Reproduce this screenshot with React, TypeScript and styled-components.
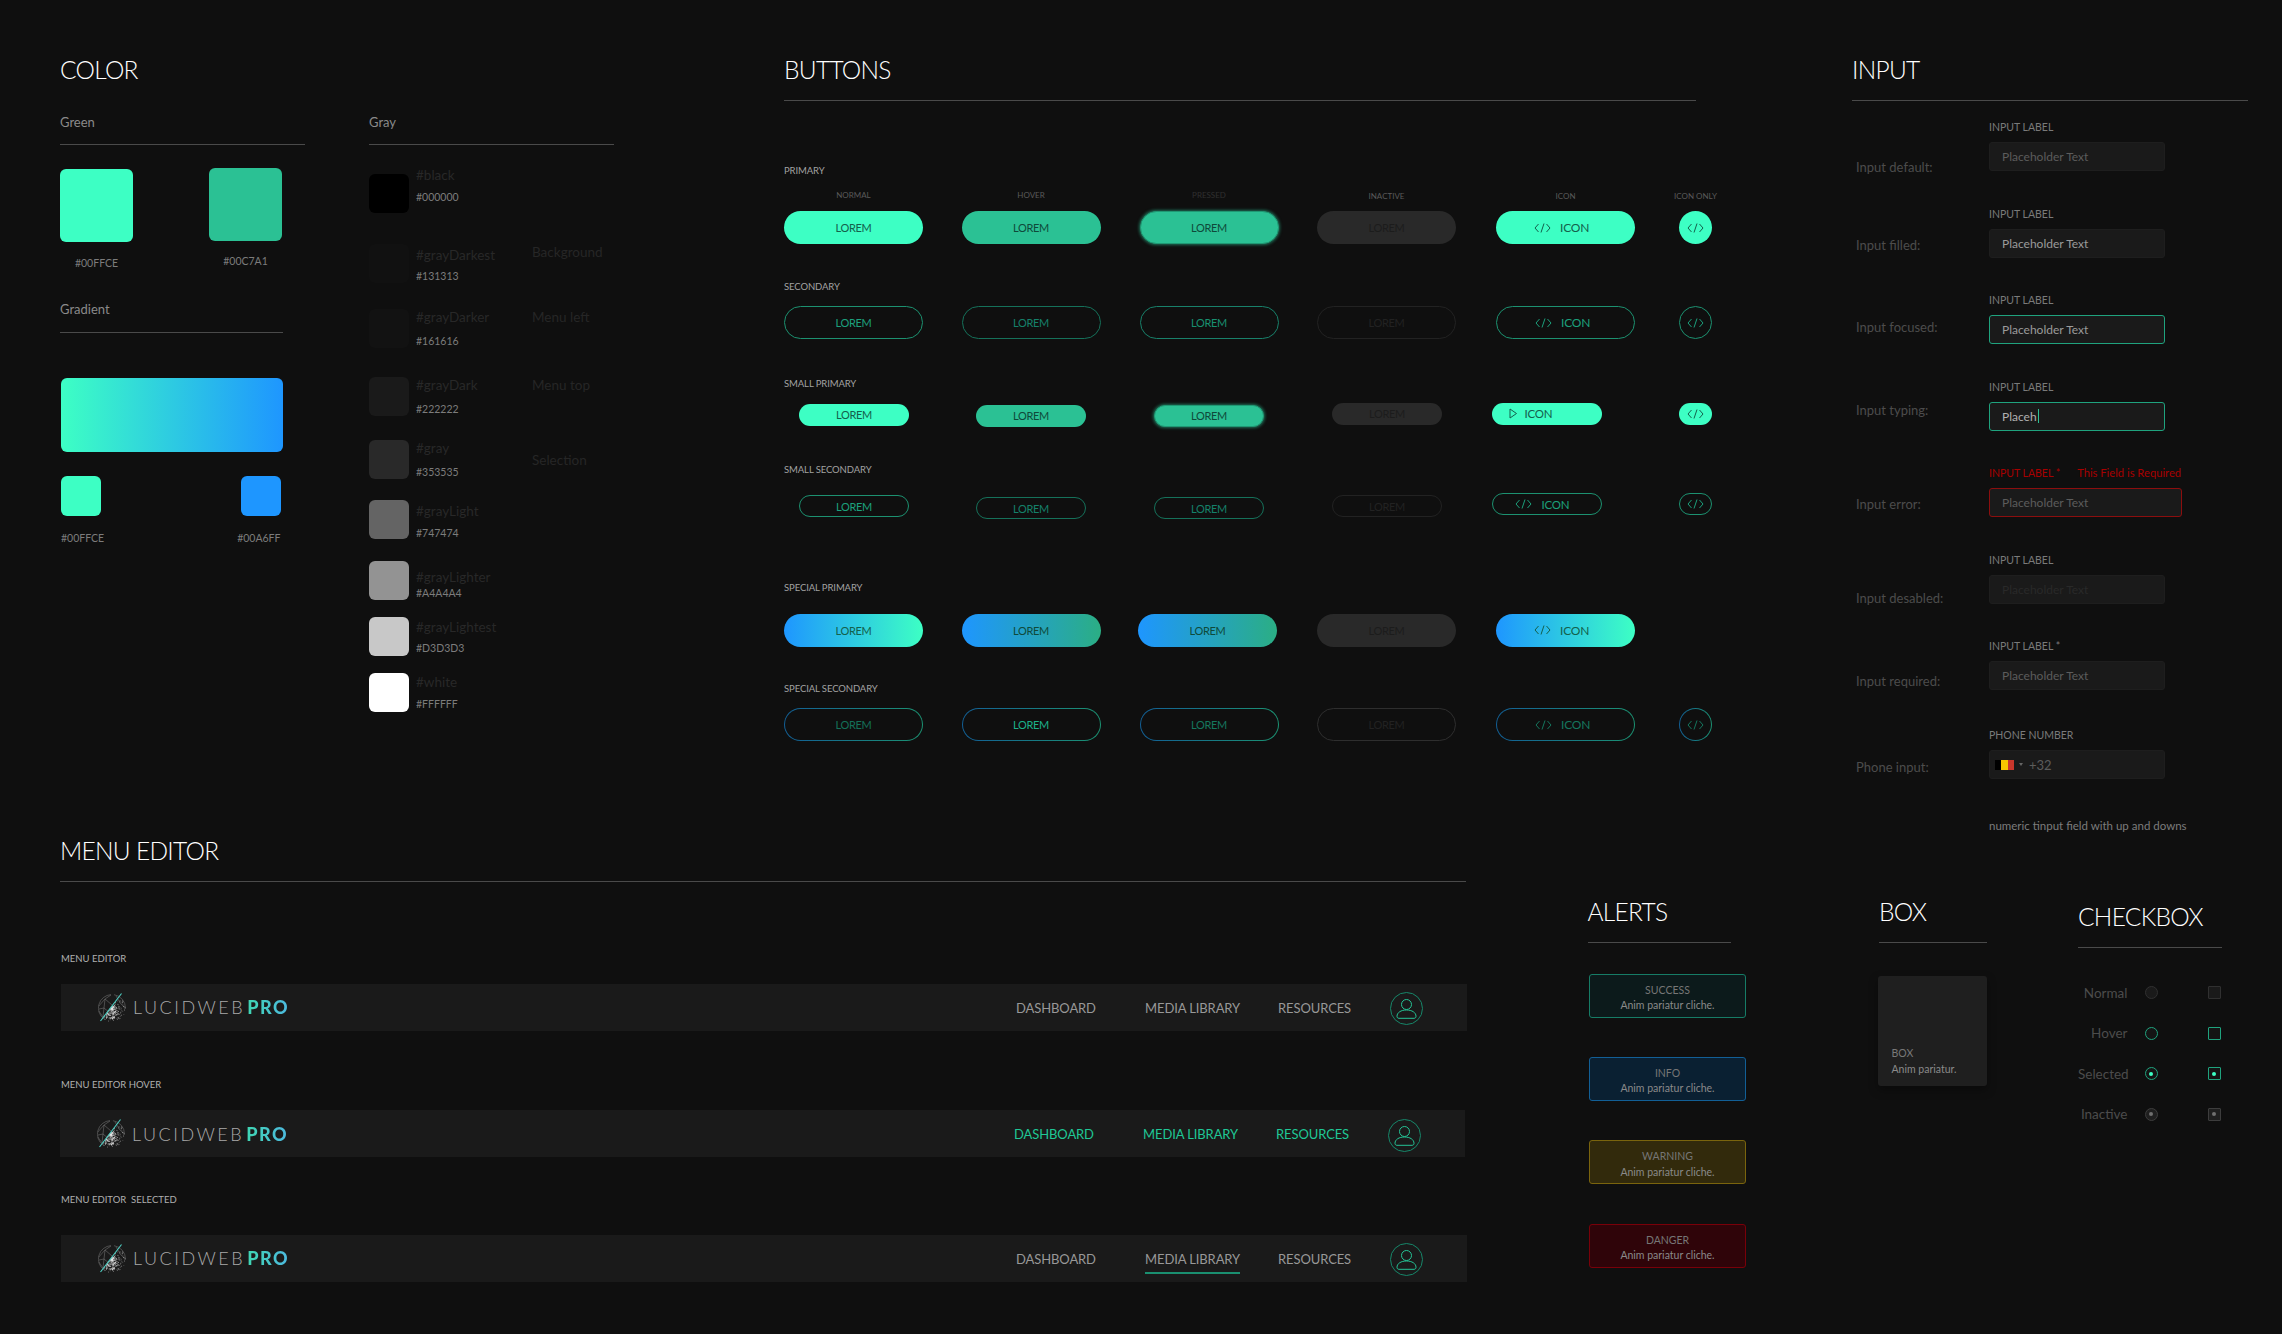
import React from 'react';
import styled, { createGlobalStyle, css } from 'styled-components';

const GlobalStyle = createGlobalStyle`
    html, body {
        margin: 0;
        padding: 0;
        background: #0f0f0f;
    }
    * {
        box-sizing: border-box;
    }
`;

const FONT = `Lato, 'Open Sans', 'Liberation Sans', sans-serif`;

const Page = styled.div`
    width: 2282px;
    height: 1334px;
    overflow: hidden;
    background: #0f0f0f;
    font-family: ${FONT};
    display: flex;
    flex-direction: column;
`;

const TopRow = styled.div`
    height: 836px;
    padding: 55px 0 0 60px;
    display: grid;
    grid-template-columns: 309px 415px 1068px 395px;
    align-items: start;
`;

const BottomRow = styled.div`
    padding-left: 60px;
    display: grid;
    grid-template-columns: 1527.5px 291.5px 199px 160px;
    align-items: start;
`;

const Column = styled.section<{ $top?: number; $left?: number }>`
    display: flex;
    flex-direction: column;
    align-items: flex-start;
    margin-top: ${(p) => p.$top ?? 0}px;
    margin-left: ${(p) => p.$left ?? 0}px;
`;

const Title = styled.h2`
    margin: 0;
    height: 30px;
    font-size: 24.5px;
    line-height: 30px;
    font-weight: 300;
    letter-spacing: -0.7px;
    color: #ffffff;
    white-space: nowrap;
`;

const Rule = styled.div<{ $w: number; $top?: number }>`
    width: ${(p) => p.$w}px;
    height: 1px;
    margin-top: ${(p) => p.$top ?? 15}px;
    background: #4a4a4a;
`;

/* color */
const SubLabel = styled.div<{ $top: number }>`
    margin-top: ${(p) => p.$top}px;
    height: 16px;
    font-size: 13px;
    line-height: 16px;
    color: #8a8a8a;
`;

const SwatchRow = styled.div<{ $w: number; $top: number; $left?: number }>`
    width: ${(p) => p.$w}px;
    margin-top: ${(p) => p.$top}px;
    margin-left: ${(p) => p.$left ?? 0}px;
    display: flex;
    justify-content: space-between;
    align-items: flex-start;
`;

const SwatchItem = styled.div<{ $top?: number; $align?: string }>`
    display: flex;
    flex-direction: column;
    align-items: ${(p) => p.$align ?? 'center'};
    margin-top: ${(p) => p.$top ?? 0}px;
`;

const Swatch = styled.div<{ $size: number; $color: string }>`
    width: ${(p) => p.$size}px;
    height: ${(p) => p.$size}px;
    border-radius: 6px;
    background: ${(p) => p.$color};
`;

const Caption = styled.div<{ $top: number }>`
    margin-top: ${(p) => p.$top}px;
    height: 14px;
    font-size: 10.5px;
    line-height: 14px;
    color: #7c7c7c;
    white-space: nowrap;
`;

const GradientBar = styled.div`
    width: 221.5px;
    height: 73.5px;
    margin: 45px 0 0 1px;
    border-radius: 6px;
    background: linear-gradient(90deg, #3dffc4 0%, #1e96ff 100%);
`;

const GrayRow = styled.div<{ $top: number }>`
    margin-top: ${(p) => p.$top}px;
    width: 320px;
    height: 39px;
    display: grid;
    grid-template-columns: 47px 116px auto;
    align-items: start;
`;

const GraySwatch = styled.div<{ $color: string }>`
    width: 40px;
    height: 39px;
    border-radius: 6px;
    background: ${(p) => p.$color};
`;

const GrayText = styled.div`
    display: flex;
    flex-direction: column;
`;

const GrayName = styled.div<{ $top: number }>`
    margin-top: ${(p) => p.$top}px;
    height: 16px;
    font-size: 13.5px;
    line-height: 16px;
    color: #282828;
    white-space: nowrap;
`;

const GrayHex = styled.div<{ $top: number }>`
    margin-top: ${(p) => p.$top}px;
    height: 14px;
    font-size: 10.5px;
    line-height: 14px;
    color: #7c7c7c;
`;

const GrayNote = styled.div<{ $top: number }>`
    margin-top: ${(p) => p.$top}px;
    height: 16px;
    font-size: 13.5px;
    line-height: 16px;
    color: #262626;
    white-space: nowrap;
`;

/* buttons */
const GroupLabel = styled.div<{ $top: number; $left?: number }>`
    margin-top: ${(p) => p.$top}px;
    margin-left: ${(p) => p.$left ?? 0}px;
    height: 14px;
    font-size: 9.5px;
    line-height: 14px;
    letter-spacing: -0.1px;
    color: #a2a2a2;
    white-space: nowrap;
`;

const ButtonGrid = styled.div<{ $top: number }>`
    margin-top: ${(p) => p.$top}px;
    display: grid;
    grid-template-columns: 177.5px 178px 177.5px 179px 183px 33px;
    align-items: start;
`;

const HeadCell = styled.div<{ $color: string; $w?: number; $dy?: number; $left?: number }>`
    width: ${(p) => p.$w ?? 139}px;
    margin-left: ${(p) => p.$left ?? 0}px;
    margin-top: ${(p) => p.$dy ?? 0}px;
    text-align: center;
    height: 14px;
    font-size: 8px;
    line-height: 14px;
    color: ${(p) => p.$color};
    white-space: nowrap;
`;

type Kind =
    | 'primary'
    | 'hover'
    | 'pressed'
    | 'off'
    | 'line'
    | 'lineHover'
    | 'linePressed'
    | 'lineOff'
    | 'special'
    | 'specialHover'
    | 'ring'
    | 'ringDim'
    | 'ringBright'
    | 'ringOff';

const ink = '#14604c';

const ring = (from: string, to: string) => css`
    border: 1px solid transparent;
    background:
        linear-gradient(#0f0f0f, #0f0f0f) padding-box,
        linear-gradient(90deg, ${from}, ${to}) border-box;
`;

const kinds: Record<Kind, ReturnType<typeof css>> = {
    primary: css`
        background: #3dffc4;
        color: ${ink};
    `,
    hover: css`
        background: #2bc194;
        color: #0f4a3a;
    `,
    pressed: css`
        background: #2bc194;
        color: #0f4a3a;
        box-shadow: 0 0 3px 1px #2bc19488;
        border: 1px solid #1f9873;
    `,
    off: css`
        background: #292929;
        color: #1c1c1c;
    `,
    line: css`
        background: transparent;
        border: 1px solid #1c9170;
        color: #1ca07c;
    `,
    lineHover: css`
        background: transparent;
        border: 1px solid #15715a;
        color: #15806a;
    `,
    linePressed: css`
        background: transparent;
        border: 1px solid #18806a;
        color: #189070;
    `,
    lineOff: css`
        background: transparent;
        border: 1px solid #222222;
        color: #222222;
    `,
    special: css`
        background: linear-gradient(90deg, #1e96ff 0%, #3dffc4 100%);
        color: ${ink};
    `,
    specialHover: css`
        background: linear-gradient(90deg, #1e96ff 0%, #2bae84 100%);
        color: #0f4a3a;
    `,
    ring: css`
        ${ring('#125f96', '#1b9272')};
        color: #15765e;
    `,
    ringDim: css`
        ${ring('#125f96', '#1b9272')};
        color: #147058;
    `,
    ringBright: css`
        ${ring('#125f96', '#1b9272')};
        color: #1cb08a;
    `,
    ringOff: css`
        background: transparent;
        border: 1px solid #2e2e2e;
        color: #222222;
    `,
};

const Btn = styled.button<{
    $kind: Kind;
    $small?: boolean;
    $round?: boolean;
    $dx?: number;
    $dy?: number;
    $iconFirst?: number;
}>`
    appearance: none;
    border: none;
    padding: 0;
    margin: ${(p) => p.$dy ?? 0}px 0 0 ${(p) => p.$dx ?? 0}px;
    width: ${(p) => (p.$round ? 33 : p.$small ? 110 : 139)}px;
    height: ${(p) => (p.$small ? 22 : 33)}px;
    border-radius: ${(p) => (p.$small ? 11 : 16.5)}px;
    font-family: ${FONT};
    font-size: 11px;
    letter-spacing: -0.3px;
    display: flex;
    align-items: center;
    justify-content: ${(p) => (p.$iconFirst !== undefined ? 'flex-start' : 'center')};
    padding-left: ${(p) => p.$iconFirst ?? 0}px;
    white-space: nowrap;
    ${(p) => kinds[p.$kind]};
`;

const IconText = styled.span<{ $gap: number; $big?: boolean }>`
    margin-left: ${(p) => p.$gap}px;
    font-size: ${(p) => (p.$big ? 12 : 11.5)}px;
    letter-spacing: -0.2px;
`;

const CodeIcon = () => (
    <svg width="17" height="10" viewBox="0 0 17 10" fill="none" stroke="currentColor" strokeWidth="1">
        <path d="M4.5 1 1 5l3.5 4" />
        <path d="M12.5 1 16 5l-3.5 4" />
        <path d="M10 .5 7 9.5" />
    </svg>
);

const PlayIcon = () => (
    <svg width="9" height="11" viewBox="0 0 9 11" fill="none" stroke="currentColor" strokeWidth="1">
        <path d="M1 1v9l6.5-4.5z" />
    </svg>
);

/* input */
const InputRows = styled.div`
    display: flex;
    flex-direction: column;
`;

const InputRow = styled.div<{ $top: number }>`
    margin-top: ${(p) => p.$top}px;
    display: grid;
    grid-template-columns: 137px auto;
    grid-template-rows: 51px;
    align-items: start;
`;

const RowLabel = styled.div<{ $top: number }>`
    margin: ${(p) => p.$top}px 0 0 4px;
    height: 16px;
    font-size: 13px;
    line-height: 16px;
    color: #4c4c4c;
    white-space: nowrap;
`;

const FieldHead = styled.div`
    height: 14px;
    display: flex;
    gap: 17px;
    align-items: center;
    white-space: nowrap;
`;

const FieldLabel = styled.span<{ $error?: boolean }>`
    font-size: 10.5px;
    color: ${(p) => (p.$error ? '#a80000' : '#7a7a7a')};
`;

const FieldError = styled.span`
    font-size: 11.2px;
    color: #a80000;
`;

const Field = styled.div<{ $tone: string; $border?: string; $wide?: boolean }>`
    margin-top: 8px;
    width: ${(p) => (p.$wide ? 193 : 176)}px;
    height: 29px;
    padding-left: 12px;
    display: flex;
    align-items: center;
    border-radius: 3px;
    background: #1a1a1a;
    border: 1px solid ${(p) => p.$border ?? '#1e1e1e'};
    font-size: 12px;
    color: ${(p) => p.$tone};
    white-space: nowrap;
`;

const Cursor = styled.span`
    width: 1px;
    height: 14px;
    margin-left: 1px;
    background: #2bc194;
`;

const PhoneField = styled(Field)`
    padding-left: 5px;
    font-size: 13px;
`;

const FlagBand = styled.span<{ $color: string }>`
    width: 6.3px;
    height: 10px;
    background: ${(p) => p.$color};
`;

const Caret = styled.span`
    width: 0;
    height: 0;
    margin: 0 6px 0 5px;
    border-left: 2.5px solid transparent;
    border-right: 2.5px solid transparent;
    border-top: 3px solid #666666;
`;

const InputNote = styled.div`
    margin: 40px 0 0 137px;
    height: 14px;
    font-size: 11.5px;
    line-height: 14px;
    color: #7c7c7c;
    white-space: nowrap;
`;

/* menu */
const MenuLabel = styled.div<{ $top: number }>`
    margin: ${(p) => p.$top}px 0 0 1px;
    height: 14px;
    font-size: 9.5px;
    line-height: 14px;
    color: #b0b0b0;
    white-space: pre;
`;

const MenuBar = styled.nav<{ $top: number; $left: number; $w: number }>`
    margin-top: ${(p) => p.$top}px;
    margin-left: ${(p) => p.$left}px;
    width: ${(p) => p.$w}px;
    height: 47.5px;
    padding: 0 44.5px 0 37px;
    display: flex;
    align-items: center;
    justify-content: space-between;
    background: #1a1a1a;
`;

const Logo = styled.div`
    display: flex;
    align-items: center;
`;

const LogoWord = styled.span`
    margin-left: 7px;
    font-size: 18px;
    font-weight: 300;
    letter-spacing: 2.5px;
    color: #a9a9a9;
`;

const LogoPro = styled.span`
    margin-left: 2px;
    font-size: 18px;
    font-weight: 900;
    letter-spacing: 1.5px;
    background: linear-gradient(90deg, #3fd6b2, #4db9e0);
    -webkit-background-clip: text;
    background-clip: text;
    color: transparent;
`;

const NavGrid = styled.div`
    display: grid;
    grid-template-columns: 129px 133px 111.5px 33px;
    align-items: center;
`;

const NavItem = styled.a<{ $hover?: boolean; $selected?: boolean }>`
    position: relative;
    justify-self: start;
    margin-top: 1px;
    font-size: 13px;
    line-height: 16px;
    letter-spacing: -0.1px;
    white-space: nowrap;
    color: ${(p) => (p.$hover ? '#1fc796' : '#989898')};
    ${(p) =>
        p.$selected &&
        css`
            &::after {
                content: '';
                position: absolute;
                left: 0;
                right: 0;
                bottom: -7px;
                height: 1.5px;
                background: #1a8f70;
            }
        `}
`;

const AvatarWrap = styled.span`
    display: flex;
    margin-top: 3px;
`;

const Avatar = () => (
    <svg width="33" height="33" viewBox="0 0 33 33" fill="none">
        <circle cx="16.5" cy="16.5" r="16" stroke="#17876a" />
        <circle cx="16.5" cy="12.5" r="5" stroke="#25c496" />
        <path
            d="M7 24.3c0-3.800 4-6.300 9.500-6.300s9.500 2.500 9.500 6.300c0 1.300-.8 2-2 2H9c-1.200 0-2-.7-2-2z"
            stroke="#25c496"
        />
    </svg>
);

// speckled half of the logo globe
const speckles = (() => {
    const dots: { x: number; y: number; o: number }[] = [];
    let seed = 7;
    const rnd = () => {
        seed = (seed * 16807) % 2147483647;
        return seed / 2147483647;
    };
    for (let i = 0; i < 640; i++) {
        const a = rnd() * Math.PI * 2;
        const r = Math.pow(rnd(), 0.7) * 13.5;
        const x = 14 + Math.cos(a) * r;
        const y = 15 + Math.sin(a) * r;
        const line = 14 + (14 - y) * 0.78;
        if (x < line - 0.5) continue;
        const near = 1 - Math.min(1, Math.hypot(x - 12, y - 20) / 13);
        if (rnd() > near + 0.3) continue;
        dots.push({ x, y, o: 0.45 + near * 0.55 });
    }
    return dots;
})();

const Globe = () => (
    <svg width="28" height="29" viewBox="0 0 28 29" fill="none">
        <g stroke="#6e6e6e" strokeWidth="0.6">
            <path d="M13 1.600A13.500 13.500 0 0 0 6 26" />
            <path d="M.8 13 7 6l6-4M7 6l-1 9 6 5M6 15l-5 1M6 15l-1 9M7 6l7 6M.8 18l5 7" />
            <path d="M16 1.700A13.500 13.500 0 0 1 27.500 15" />
            <path d="M18 3l5 8 4.500 4" />
        </g>
        {speckles.map((d, i) => (
            <circle key={i} cx={d.x} cy={d.y} r="0.45" fill="#ffffff" opacity={d.o} />
        ))}
        <path d="M2.500 28 23.500 .5" stroke="#4fd1c5" strokeWidth="1.1" />
    </svg>
);

/* alerts, box, checkbox */
const Alert = styled.div<{ $bg: string; $line: string; $top: number }>`
    margin: ${(p) => p.$top}px 0 0 1.5px;
    width: 157px;
    height: 44px;
    padding-top: 8px;
    border-radius: 3px;
    border: 1px solid ${(p) => p.$line};
    background: ${(p) => p.$bg};
    text-align: center;
`;

const AlertTitle = styled.div`
    height: 14px;
    font-size: 10.5px;
    line-height: 14px;
    color: #767676;
`;

const AlertText = styled.div`
    margin-top: 1.5px;
    height: 14px;
    font-size: 10.5px;
    line-height: 14px;
    color: #8a8a8a;
`;

const Box = styled.div`
    margin: 33px 0 0 -1.5px;
    width: 109.5px;
    height: 110px;
    padding: 0 0 10px 14px;
    display: flex;
    flex-direction: column;
    justify-content: flex-end;
    border-radius: 3px;
    background: #1f1f1f;
    box-shadow: 0 4px 10px rgba(0, 0, 0, 0.35);
`;

const BoxTitle = styled.div`
    height: 14px;
    font-size: 10.5px;
    line-height: 14px;
    color: #787878;
`;

const BoxText = styled.div`
    margin-top: 1.500px;
    height: 14px;
    font-size: 10.5px;
    line-height: 14px;
    color: #8a8a8a;
`;

const CheckGrid = styled.div`
    margin-top: 24px;
    display: grid;
    grid-template-columns: 49.5px 17px 13px 50px 13.5px;
    grid-auto-rows: 40.6px;
    align-items: center;
`;

const CheckLabel = styled.div`
    grid-column: 1;
    text-align: right;
    font-size: 13.5px;
    color: #4c4c4c;
    white-space: nowrap;
`;

const radioColors = {
    normal: { line: '#303030', dot: 'transparent', bg: '#1a1a1a' },
    hover: { line: '#1fa37e', dot: 'transparent', bg: '#141414' },
    selected: { line: '#1fa37e', dot: '#3dffc4', bg: '#141414' },
    inactive: { line: '#3d3d3d', dot: '#707070', bg: '#1f1f1f' },
};

type CheckState = keyof typeof radioColors;

const Mark = styled.div<{ $state: CheckState; $column: number; $round?: boolean }>`
    grid-column: ${(p) => p.$column};
    width: 13px;
    height: 13px;
    display: flex;
    align-items: center;
    justify-content: center;
    border-radius: ${(p) => (p.$round ? '50%' : '1px')};
    border: 1px solid ${(p) => radioColors[p.$state].line};
    background: ${(p) => radioColors[p.$state].bg};
    &::after {
        content: '';
        width: 4px;
        height: 4px;
        border-radius: 50%;
        background: ${(p) => radioColors[p.$state].dot};
    }
`;

const grays = [
    { color: '#000000', name: '#black', hex: '#000000', top: 29.4, nameTop: -7.5, hexGap: 7 },
    { color: '#111111', name: '#grayDarkest', hex: '#131313', top: 31, nameTop: 3, hexGap: 6, note: 'Background', noteTop: 0 },
    { color: '#121212', name: '#grayDarker', hex: '#161616', top: 26, nameTop: 0, hexGap: 9, note: 'Menu left', noteTop: 0 },
    { color: '#1a1a1a', name: '#grayDark', hex: '#222222', top: 29, nameTop: 0, hexGap: 8.5, note: 'Menu top', noteTop: 0 },
    { color: '#292929', name: '#gray', hex: '#353535', top: 24, nameTop: 0, hexGap: 9, note: 'Selection', noteTop: 12 },
    { color: '#646464', name: '#grayLight', hex: '#747474', top: 21, nameTop: 2.5, hexGap: 7.5 },
    { color: '#939393', name: '#grayLighter', hex: '#A4A4A4', top: 21.5, nameTop: 8, hexGap: 1 },
    { color: '#c8c8c8', name: '#grayLightest', hex: '#D3D3D3', top: 17, nameTop: 2.5, hexGap: 6 },
    { color: '#ffffff', name: '#white', hex: '#FFFFFF', top: 17, nameTop: 1.5, hexGap: 7 },
];

const heads = [
    { text: 'NORMAL', color: '#5a5a5a' },
    { text: 'HOVER', color: '#5a5a5a' },
    { text: 'PRESSED', color: '#303030' },
    { text: 'INACTIVE', color: '#5a5a5a', dy: 0.5 },
    { text: 'ICON', color: '#5a5a5a', dy: 0.5 },
    { text: 'ICON ONLY', color: '#5a5a5a', dy: 0.5, w: 53, left: -10 },
];

const fields = [
    { top: 19, side: 39, name: 'Input default:', label: 'INPUT LABEL', text: 'Placeholder Text', tone: '#5c5c5c' },
    { top: 35.7, side: 30.6, name: 'Input filled:', label: 'INPUT LABEL', text: 'Placeholder Text', tone: '#9a9a9a' },
    { top: 35.3, side: 25.7, name: 'Input focused:', label: 'INPUT LABEL', text: 'Placeholder Text', tone: '#9a9a9a', border: '#1fa37e' },
    { top: 35.7, side: 22, name: 'Input typing:', label: 'INPUT LABEL', text: 'Placeh', tone: '#b0b0b0', border: '#1fa37e', cursor: true },
    { top: 35.3, side: 30, name: 'Input error:', label: 'INPUT LABEL *', text: 'Placeholder Text', tone: '#5c5c5c', border: '#8c0e0e', error: 'This Field is Required' },
    { top: 36, side: 37.5, name: 'Input desabled:', label: 'INPUT LABEL', text: 'Placeholder Text', tone: '#292929' },
    { top: 35.4, side: 34, name: 'Input required:', label: 'INPUT LABEL *', text: 'Placeholder Text', tone: '#5c5c5c' },
];

const alerts = [
    { title: 'SUCCESS', bg: '#0c1a1b', line: '#167c66', top: 31 },
    { title: 'INFO', bg: '#0a2032', line: '#125f96', top: 39.3 },
    { title: 'WARNING', bg: '#322a0c', line: '#7a640d', top: 39.3 },
    { title: 'DANGER', bg: '#2f0409', line: '#790009', top: 39.3 },
];

const checks: { label: string; state: CheckState }[] = [
    { label: 'Normal', state: 'normal' },
    { label: 'Hover', state: 'hover' },
    { label: 'Selected', state: 'selected' },
    { label: 'Inactive', state: 'inactive' },
];

const menus = [
    { label: 'MENU EDITOR', labelTop: 69.5, top: 18.2, left: 1, w: 1406 },
    { label: 'MENU EDITOR HOVER', labelTop: 46.5, top: 18.1, left: 0, w: 1405, hover: true },
    { label: 'MENU EDITOR  SELECTED', labelTop: 36.1, top: 27.2, left: 1, w: 1406, selected: true },
];

const App: React.FC = () => {
    return (
        <Page>
            <GlobalStyle />
            <TopRow>
                <Column>
                    <Title>COLOR</Title>
                    <SubLabel $top={29}>Green</SubLabel>
                    <Rule $w={245} $top={14} />
                    <SwatchRow $w={222} $top={23}>
                        <SwatchItem $top={1.4}>
                            <Swatch $size={73} $color="#3dffc4" />
                            <Caption $top={14}>#00FFCE</Caption>
                        </SwatchItem>
                        <SwatchItem>
                            <Swatch $size={73} $color="#2bc194" />
                            <Caption $top={12.5}>#00C7A1</Caption>
                        </SwatchItem>
                    </SwatchRow>
                    <SubLabel $top={31}>Gradient</SubLabel>
                    <Rule $w={223} $top={15} />
                    <GradientBar />
                    <SwatchRow $w={219.5} $top={24.5} $left={1}>
                        <SwatchItem $align="flex-start">
                            <Swatch $size={40} $color="#3dffc4" />
                            <Caption $top={14.5}>#00FFCE</Caption>
                        </SwatchItem>
                        <SwatchItem $align="flex-end">
                            <Swatch $size={40} $color="#1e96ff" />
                            <Caption $top={14.5}>#00A6FF</Caption>
                        </SwatchItem>
                    </SwatchRow>
                </Column>

                <Column>
                    <Title>&nbsp;</Title>
                    <SubLabel $top={29}>Gray</SubLabel>
                    <Rule $w={245} $top={14} />
                    {grays.map((g) => (
                        <GrayRow key={g.name} $top={g.top}>
                            <GraySwatch $color={g.color} />
                            <GrayText>
                                <GrayName $top={g.nameTop}>{g.name}</GrayName>
                                <GrayHex $top={g.hexGap}>{g.hex}</GrayHex>
                            </GrayText>
                            {g.note && <GrayNote $top={g.noteTop}>{g.note}</GrayNote>}
                        </GrayRow>
                    ))}
                </Column>

                <Column>
                    <Title>BUTTONS</Title>
                    <Rule $w={911.5} />
                    <GroupLabel $top={63}>PRIMARY</GroupLabel>
                    <ButtonGrid $top={10}>
                        {heads.map((h) => (
                            <HeadCell key={h.text} $color={h.color} $dy={h.dy} $w={h.w} $left={h.left}>
                                {h.text}
                            </HeadCell>
                        ))}
                    </ButtonGrid>
                    <ButtonGrid $top={8.5}>
                        <Btn $kind="primary">LOREM</Btn>
                        <Btn $kind="hover">LOREM</Btn>
                        <Btn $kind="pressed">LOREM</Btn>
                        <Btn $kind="off">LOREM</Btn>
                        <Btn $kind="primary" $iconFirst={38}>
                            <CodeIcon />
                            <IconText $gap={9} $big>ICON</IconText>
                        </Btn>
                        <Btn $kind="primary" $round>
                            <CodeIcon />
                        </Btn>
                    </ButtonGrid>

                    <GroupLabel $top={35.7}>SECONDARY</GroupLabel>
                    <ButtonGrid $top={12.8}>
                        <Btn $kind="line">LOREM</Btn>
                        <Btn $kind="lineHover">LOREM</Btn>
                        <Btn $kind="linePressed">LOREM</Btn>
                        <Btn $kind="lineOff">LOREM</Btn>
                        <Btn $kind="line" $iconFirst={38}>
                            <CodeIcon />
                            <IconText $gap={9} $big>ICON</IconText>
                        </Btn>
                        <Btn $kind="line" $round>
                            <CodeIcon />
                        </Btn>
                    </ButtonGrid>

                    <GroupLabel $top={37.5}>SMALL PRIMARY</GroupLabel>
                    <ButtonGrid $top={12}>
                        <Btn $kind="primary" $small $dx={15} $dy={0.7}>LOREM</Btn>
                        <Btn $kind="hover" $small $dx={14.5} $dy={2}>LOREM</Btn>
                        <Btn $kind="pressed" $small $dx={14.5} $dy={2}>LOREM</Btn>
                        <Btn $kind="off" $small $dx={15}>LOREM</Btn>
                        <Btn $kind="primary" $small $dx={-4.5} $iconFirst={17}>
                            <PlayIcon />
                            <IconText $gap={7}>ICON</IconText>
                        </Btn>
                        <Btn $kind="primary" $small $round>
                            <CodeIcon />
                        </Btn>
                    </ButtonGrid>

                    <GroupLabel $top={36.5}>SMALL SECONDARY</GroupLabel>
                    <ButtonGrid $top={16}>
                        <Btn $kind="line" $small $dx={15} $dy={2}>LOREM</Btn>
                        <Btn $kind="lineHover" $small $dx={14.5} $dy={3.7}>LOREM</Btn>
                        <Btn $kind="lineHover" $small $dx={14.5} $dy={3.7}>LOREM</Btn>
                        <Btn $kind="lineOff" $small $dx={15} $dy={1.7}>LOREM</Btn>
                        <Btn $kind="line" $small $dx={-4.5} $iconFirst={22}>
                            <CodeIcon />
                            <IconText $gap={10}>ICON</IconText>
                        </Btn>
                        <Btn $kind="line" $small $round>
                            <CodeIcon />
                        </Btn>
                    </ButtonGrid>

                    <GroupLabel $top={62.3}>SPECIAL PRIMARY</GroupLabel>
                    <ButtonGrid $top={18.3}>
                        <Btn $kind="special">LOREM</Btn>
                        <Btn $kind="specialHover">LOREM</Btn>
                        <Btn $kind="specialHover" $dx={-1.5}>LOREM</Btn>
                        <Btn $kind="off">LOREM</Btn>
                        <Btn $kind="special" $iconFirst={38}>
                            <CodeIcon />
                            <IconText $gap={9} $big>ICON</IconText>
                        </Btn>
                    </ButtonGrid>

                    <GroupLabel $top={35}>SPECIAL SECONDARY</GroupLabel>
                    <ButtonGrid $top={12.7}>
                        <Btn $kind="ringDim">LOREM</Btn>
                        <Btn $kind="ringBright">LOREM</Btn>
                        <Btn $kind="ring">LOREM</Btn>
                        <Btn $kind="ringOff">LOREM</Btn>
                        <Btn $kind="ring" $iconFirst={38}>
                            <CodeIcon />
                            <IconText $gap={9} $big>ICON</IconText>
                        </Btn>
                        <Btn $kind="ring" $round>
                            <CodeIcon />
                        </Btn>
                    </ButtonGrid>
                </Column>

                <Column>
                    <Title>INPUT</Title>
                    <Rule $w={395.5} />
                    <InputRows>
                        {fields.map((f) => (
                            <InputRow key={f.name} $top={f.top}>
                                <RowLabel $top={f.side}>{f.name}</RowLabel>
                                <div>
                                    <FieldHead>
                                        <FieldLabel $error={!!f.error}>{f.label}</FieldLabel>
                                        {f.error && <FieldError>{f.error}</FieldError>}
                                    </FieldHead>
                                    <Field $tone={f.tone} $border={f.border} $wide={!!f.error}>
                                        {f.text}
                                        {f.cursor && <Cursor />}
                                    </Field>
                                </div>
                            </InputRow>
                        ))}
                        <InputRow $top={38}>
                            <RowLabel $top={30.7}>Phone input:</RowLabel>
                            <div>
                                <FieldHead>
                                    <FieldLabel>PHONE NUMBER</FieldLabel>
                                </FieldHead>
                                <PhoneField $tone="#5c5c5c">
                                    <FlagBand $color="#000000" />
                                    <FlagBand $color="#f7c600" />
                                    <FlagBand $color="#c9372c" />
                                    <Caret />
                                    +32
                                </PhoneField>
                            </div>
                        </InputRow>
                        <InputNote>numeric tinput field with up and downs</InputNote>
                    </InputRows>
                </Column>
            </TopRow>

            <BottomRow>
                <Column>
                    <Title>MENU EDITOR</Title>
                    <Rule $w={1406} />
                    {menus.map((m) => (
                        <React.Fragment key={m.label}>
                            <MenuLabel $top={m.labelTop}>{m.label}</MenuLabel>
                            <MenuBar $top={m.top} $left={m.left} $w={m.w}>
                                <Logo>
                                    <Globe />
                                    <LogoWord>LUCIDWEB</LogoWord>
                                    <LogoPro>PRO</LogoPro>
                                </Logo>
                                <NavGrid>
                                    <NavItem $hover={m.hover}>DASHBOARD</NavItem>
                                    <NavItem $hover={m.hover} $selected={m.selected}>MEDIA LIBRARY</NavItem>
                                    <NavItem $hover={m.hover}>RESOURCES</NavItem>
                                    <AvatarWrap>
                                        <Avatar />
                                    </AvatarWrap>
                                </NavGrid>
                            </MenuBar>
                        </React.Fragment>
                    ))}
                </Column>

                <Column $top={60.7}>
                    <Title>ALERTS</Title>
                    <Rule $w={143} />
                    {alerts.map((a) => (
                        <Alert key={a.title} $bg={a.bg} $line={a.line} $top={a.top}>
                            <AlertTitle>{a.title}</AlertTitle>
                            <AlertText>Anim pariatur cliche.</AlertText>
                        </Alert>
                    ))}
                </Column>

                <Column $top={60.7}>
                    <Title>BOX</Title>
                    <Rule $w={108} />
                    <Box>
                        <BoxTitle>BOX</BoxTitle>
                        <BoxText>Anim pariatur.</BoxText>
                    </Box>
                </Column>

                <Column $top={66.3}>
                    <Title>CHECKBOX</Title>
                    <Rule $w={143.5} />
                    <CheckGrid>
                        {checks.map((c) => (
                            <React.Fragment key={c.label}>
                                <CheckLabel>{c.label}</CheckLabel>
                                <Mark $state={c.state} $column={3} $round />
                                <Mark $state={c.state} $column={5} />
                            </React.Fragment>
                        ))}
                    </CheckGrid>
                </Column>
            </BottomRow>
        </Page>
    );
};

export default App;
